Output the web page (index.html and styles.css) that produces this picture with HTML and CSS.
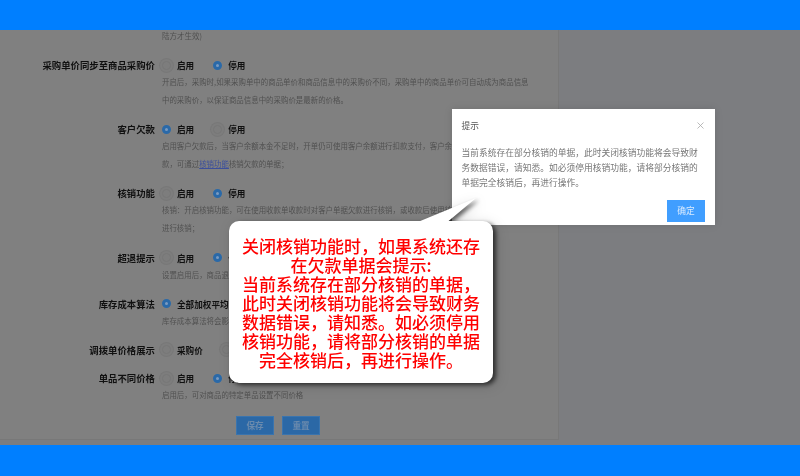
FILE: index.html
```html
<!DOCTYPE html>
<html lang="zh-CN">
<head>
<meta charset="utf-8">
<title>核销功能</title>
<link rel="stylesheet" href="styles.css">
</head>
<body>
<div class="page">
  <div class="bar"></div>
  <main class="main">
    <form class="form">
      <p class="clip-line">陆方才生效)</p>
      <div class="row">
        <div class="label">采购单价同步至商品采购价</div>
        <div class="field">
          <div class="options"><span class="opt"><i class="radio"></i>启用</span><span class="opt"><i class="radio on"></i>停用</span></div>
          <p class="desc">开启后，采购时,如果采购单中的商品单价和商品信息中的采购价不同，采购单中的商品单价可自动成为商品信息<br>中的采购价，以保证商品信息中的采购价是最新的价格。</p>
        </div>
      </div>
      <div class="row">
        <div class="label">客户欠款</div>
        <div class="field">
          <div class="options"><span class="opt"><i class="radio on"></i>启用</span><span class="opt"><i class="radio"></i>停用</span></div>
          <p class="desc">启用客户欠款后，当客户余额本金不足时，开单仍可使用客户余额进行扣款支付，客户余额将变为负数，形成欠<br>款，可通过<a class="link">核销功能</a>核销欠款的单据；</p>
        </div>
      </div>
      <div class="row">
        <div class="label">核销功能</div>
        <div class="field">
          <div class="options"><span class="opt"><i class="radio"></i>启用</span><span class="opt"><i class="radio on"></i>停用</span></div>
          <p class="desc">核销：开启核销功能，可在使用收款单收款时对客户单据欠款进行核销，或收款后使用核销功能对单据<br>进行核销；</p>
        </div>
      </div>
      <div class="row">
        <div class="label">超退提示</div>
        <div class="field">
          <div class="options"><span class="opt"><i class="radio"></i>启用</span><span class="opt"><i class="radio on"></i>停用</span></div>
          <p class="desc">设置启用后，商品退货数量超过销售数量时将会提示；</p>
        </div>
      </div>
      <div class="row">
        <div class="label">库存成本算法</div>
        <div class="field">
          <div class="options"><span class="opt"><i class="radio on"></i>全部加权平均法</span></div>
          <p class="desc">库存成本算法将会影响商品的成本价格；</p>
        </div>
      </div>
      <div class="row">
        <div class="label">调拨单价格展示</div>
        <div class="field">
          <div class="options"><span class="opt"><i class="radio"></i>采购价</span><span class="opt"><i class="radio"></i>成本价</span></div>
        </div>
      </div>
      <div class="row">
        <div class="label">单品不同价格</div>
        <div class="field">
          <div class="options"><span class="opt"><i class="radio"></i>启用</span><span class="opt"><i class="radio on"></i>停用</span></div>
          <p class="desc">启用后，可对商品的特定单品设置不同价格</p>
        </div>
      </div>
      <div class="actions"><span class="btn">保存</span><span class="btn">重置</span></div>
    </form>
  </main>
  <div class="bar bar-bottom"></div>

  <section class="dialog">
    <header class="dialog-head">
      <span>提示</span>
      <svg class="close" viewBox="0 0 7 7" width="7" height="7"><path d="M.5.5l6 6M6.5.5l-6 6" stroke="#a9a9a9" stroke-width=".8" fill="none"/></svg>
    </header>
    <p class="dialog-body">当前系统存在部分核销的单据，此时关闭核销功能将会导致财<br>务数据错误，请知悉。如必须停用核销功能，请将部分核销的<br>单据完全核销后，再进行操作。</p>
    <div class="dialog-foot"><span class="ok">确定</span></div>
  </section>

  <aside class="callout">
    <svg class="tail" viewBox="0 0 70 26" width="70" height="26"><path d="M0 26L63 0 32 26Z" fill="#fff"/></svg>
    <div class="bubble">关闭核销功能时，如果系统还存<br>在欠款单据会提示:<br>当前系统存在部分核销的单据，<br>此时关闭核销功能将会导致财务<br>数据错误，请知悉。如必须停用<br>核销功能，请将部分核销的单据<br>完全核销后，再进行操作。</div>
  </aside>
</div>
</body>
</html>
```
FILE: styles.css
```css
* { box-sizing: border-box; }
html, body { margin: 0; padding: 0; }
body { font-family: "Noto Sans CJK SC", "Noto Sans", sans-serif; background: #7c7d80; }
.page { position: relative; width: 800px; height: 476px; display: flex; flex-direction: column; overflow: hidden; }
.bar { height: 30px; background: #007fff; flex: none; }
.bar-bottom { height: 31px; }
.main { flex: 1; min-height: 0; background: #7c7d80; overflow: hidden; }

.form { width: 559px; height: 410px; background: #808080; border-right: 1px solid #787878; border-bottom: 1px solid #787878; display: flex; flex-direction: column; filter: blur(.3px); }
p { margin: 0; }
.clip-line { margin-left: 162px; font-size: 7.5px; line-height: 12px; height: 12px; color: #505050; margin-bottom: 15px; }
.row { display: grid; grid-template-columns: 155px 372px; column-gap: 7px; margin-bottom: 12.2px; }
.label { font-size: 9.4px; line-height: 16px; font-weight: 700; color: #101010; text-align: right; white-space: nowrap; }
.options { display: flex; gap: 19px; height: 16px; align-items: center; }
.opt { display: flex; align-items: center; gap: 6px; font-size: 8.6px; font-weight: 700; line-height: 16px; color: #101010; white-space: nowrap; }
.radio { width: 9px; height: 9px; border-radius: 50%; background: #7d7d7d; border: 1px solid #777; box-shadow: 0 0 0 2px #7d7d7d, 0 0 0 3px #787878; flex: none; }
.radio.on { background: #7a9ac0; border: 3px solid #2a69a8; box-shadow: none; }
.desc { font-size: 7.45px; line-height: 18px; color: #505050; white-space: nowrap; }
.link { color: #3c4f9b; text-decoration: underline; }
.actions { display: flex; gap: 8px; margin-left: 236px; }
.btn { width: 38px; height: 19px; background: #2b68a6; border: 1px solid #3a74ae; color: #6a8aad; font-size: 8.6px; font-weight: 700; text-align: center; line-height: 17px; }

.dialog { position: absolute; left: 451.5px; top: 109px; width: 263.5px; height: 116px; background: #fff; box-shadow: 0 0 8px rgba(0,0,0,.12); padding: 10px 10px 6px; display: flex; flex-direction: column; color: #666; filter: blur(.25px); }
.dialog-head { display: flex; justify-content: space-between; align-items: center; height: 13px; font-size: 8.75px; color: #555; }
.close { margin-right: 1px; }
.dialog-body { margin-top: 13px; font-size: 8.75px; line-height: 15px; height: 45px; color: #777; white-space: nowrap; }
.dialog-foot { display: flex; justify-content: flex-end; margin-top: 10px; }
.ok { width: 38px; height: 22px; background: #409eff; color: #d8ebff; font-size: 8.75px; line-height: 22px; text-align: center; }

.callout { position: absolute; left: 229px; top: 221px; width: 264px; height: 162px; filter: drop-shadow(3px 2px 2px rgba(0,0,0,.6)) drop-shadow(2px 2px 6px rgba(0,0,0,.15)); }
.tail { position: absolute; left: 184px; top: -23.5px; display: block; }
.bubble { width: 264px; height: 162px; background: #fff; border-radius: 10px; padding-top: 15px; text-align: center; font-size: 17px; line-height: 19px; font-weight: 500; color: #f00; white-space: nowrap; }
```
